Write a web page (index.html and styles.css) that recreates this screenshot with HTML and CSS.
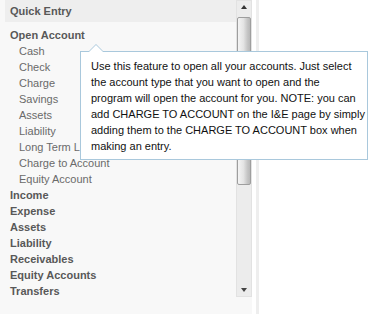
FILE: index.html
```html
<!DOCTYPE html>
<html>
<head>
<meta charset="utf-8">
<link rel="stylesheet" href="styles.css">
</head>
<body>
<div class="page">
  <div class="panel">
    <div class="content">
      <div class="header">Quick Entry</div>
      <ul class="menu">
        <li class="top">Open Account
          <ul class="sub">
            <li>Cash</li>
            <li>Check</li>
            <li>Charge</li>
            <li>Savings</li>
            <li>Assets</li>
            <li>Liability</li>
            <li>Long Term Liability</li>
            <li>Charge to Account</li>
            <li>Equity Account</li>
          </ul>
        </li>
        <li class="top">Income</li>
        <li class="top">Expense</li>
        <li class="top">Assets</li>
        <li class="top">Liability</li>
        <li class="top">Receivables</li>
        <li class="top">Equity Accounts</li>
        <li class="top">Transfers</li>
      </ul>
    </div>
    <div class="scrollbar">
      <div class="arrow up"></div>
      <div class="track"><div class="thumb"></div></div>
      <div class="arrow down"></div>
    </div>
  </div>
  <div class="strip"></div>
  <div class="rest"></div>

  <div class="tooltip">
    <div class="tip-arrow"></div>
    Use this feature to open all your accounts. Just select<br>
    the account type that you want to open and the<br>
    program will open the account for you. NOTE: you can<br>
    add CHARGE TO ACCOUNT on the I&amp;E page by simply<br>
    adding them to the CHARGE TO ACCOUNT box when<br>
    making an entry.
  </div>
</div>
</body>
</html>
```

FILE: styles.css
```css
html, body {
  margin: 0;
  padding: 0;
  background: #ffffff;
}
body {
  font-family: "Liberation Sans", Arial, sans-serif;
  font-size: 11px;
  width: 379px;
  height: 314px;
  overflow: hidden;
}
.page {
  position: relative;
  display: flex;
  height: 314px;
}
.panel {
  width: 252px;
  height: 314px;
  background: #f8f8f8;
  display: flex;
  flex-shrink: 0;
}
.content {
  flex: 1;
  overflow: hidden;
}
.header {
  margin-left: 5px;
  height: 22px;
  line-height: 22px;
  padding-left: 5px;
  background: #eeeeee;
  font-weight: bold;
  color: #585858;
}
.menu {
  list-style: none;
  margin: 5px 0 0 0;
  padding: 0 0 0 10px;
}
.top {
  font-weight: bold;
  color: #585858;
  line-height: 16px;
  white-space: nowrap;
}
.sub {
  list-style: none;
  margin: 0;
  padding: 0 0 0 9px;
}
.sub li {
  font-weight: normal;
  color: #6a6a6a;
  line-height: 16px;
}
.scrollbar {
  width: 16px;
  height: 297px;
  display: flex;
  flex-direction: column;
  background: #ececec;
  box-shadow: inset 0 0 0 1px #e2e2e2;
}
.arrow {
  height: 16px;
  display: flex;
  align-items: center;
  justify-content: center;
  flex-shrink: 0;
}
.arrow::before {
  content: "";
  width: 0;
  height: 0;
  border-left: 3.5px solid transparent;
  border-right: 3.5px solid transparent;
}
.arrow.up::before {
  border-bottom: 4px solid #333333;
  margin-top: -3px;
}
.arrow.down::before {
  border-top: 4px solid #444444;
  margin-top: 2px;
}
.track {
  flex: 1;
  padding: 1px 1px 0 1px;
}
.thumb {
  height: 166px;
  border: 1px solid #9e9e9e;
  border-radius: 2px;
  background: linear-gradient(to right, #f4f4f4 0%, #e4e4e4 45%, #c4c4c4 80%, #b8b8b8 100%);
}
.strip {
  width: 3px;
  margin-left: 4px;
  height: 314px;
  background: #eeeeee;
  flex-shrink: 0;
}
.rest {
  flex: 1;
}
.tooltip {
  position: absolute;
  left: 80px;
  top: 51px;
  width: 276px;
  height: 95px;
  padding: 6px 0 6px 10px;
  background: #ffffff;
  border: 1px solid #a9c8dc;
  color: #111111;
  font-size: 11px;
  line-height: 16px;
  white-space: nowrap;
}
.tip-arrow {
  position: absolute;
  left: 7px;
  top: -8px;
  width: 0;
  height: 0;
  border-left: 8px solid transparent;
  border-right: 8px solid transparent;
  border-bottom: 8px solid #a9c8dc;
}
.tip-arrow::after {
  content: "";
  position: absolute;
  left: -7px;
  top: 1px;
  border-left: 7px solid transparent;
  border-right: 7px solid transparent;
  border-bottom: 7px solid #ffffff;
}
```
